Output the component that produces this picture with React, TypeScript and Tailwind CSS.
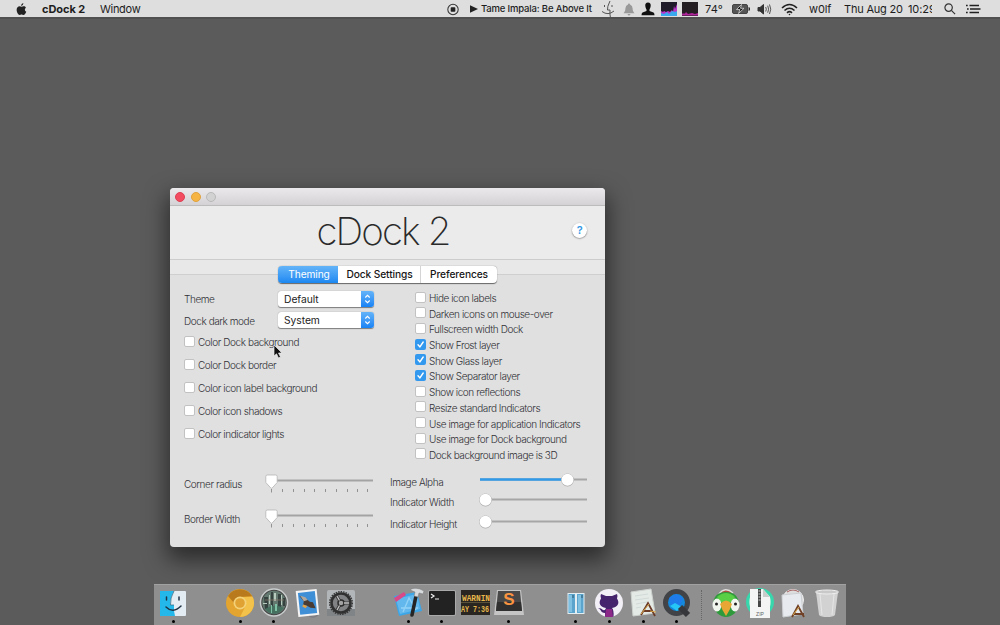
import React from "react";

type Item = { label: string; checked?: boolean };

const leftChecks: Item[] = [
  { label: "Color Dock background" },
  { label: "Color Dock border" },
  { label: "Color icon label background" },
  { label: "Color icon shadows" },
  { label: "Color indicator lights" },
];

const rightChecks: Item[] = [
  { label: "Hide icon labels" },
  { label: "Darken icons on mouse-over" },
  { label: "Fullscreen width Dock" },
  { label: "Show Frost layer", checked: true },
  { label: "Show Glass layer", checked: true },
  { label: "Show Separator layer", checked: true },
  { label: "Show icon reflections" },
  { label: "Resize standard Indicators" },
  { label: "Use image for application Indicators" },
  { label: "Use image for Dock background" },
  { label: "Dock background image is 3D" },
];

function Check({ label, checked }: Item) {
  return (
    <label className="flex items-center gap-[3px] whitespace-nowrap">
      <span
        className={
          checked
            ? "flex size-[11px] shrink-0 items-center justify-center rounded-[2px] bg-[#3299ee]"
            : "size-[11px] shrink-0 rounded-[2px] border border-[#c2c2c2] bg-white"
        }
      >
        {checked && (
          <svg viewBox="0 0 11 11" className="size-[11px]" fill="none" stroke="white" strokeWidth="1.4" strokeLinecap="round">
            <path d="M3 5.8 4.9 7.9 8.2 3" />
          </svg>
        )}
      </span>
      <span className="relative top-px">{label}</span>
    </label>
  );
}

function Select({ value }: { value: string }) {
  return (
    <div className="flex h-4 w-[96px] overflow-hidden rounded-[3px] bg-white font-['Inter',sans-serif] text-[10.3px] font-normal leading-4 tracking-[-0.05px] text-[#222] shadow-[0_0.5px_1px_rgba(0,0,0,0.45)]">
      <span className="flex-1 pl-[6px]">{value}</span>
      <span className="flex w-[13px] items-center justify-center bg-linear-to-b from-[#62b3f8] to-[#1683f5]">
        <svg viewBox="0 0 9 12" className="h-3 w-[9px]" fill="none" stroke="white" strokeWidth="1.1">
          <path d="M2.3 4.5 4.5 2.3 6.7 4.5M2.3 7.5 4.5 9.7 6.7 7.5" />
        </svg>
      </span>
    </div>
  );
}

function TickSlider() {
  return (
    <svg viewBox="0 0 110 20" className="h-5 w-[110px]">
      <path d="M2 6.5H109" stroke="#a3a3a3" strokeWidth="2" />
      <path d="M7.5 15v3.5M18.5 15v3M29.5 15v3M40.5 15v3M50.5 15v3M61.5 15v3M72.5 15v3M83.5 15v3M93.5 15v3M103.5 15v3" stroke="#929292" />
      <path d="M1.8 2.5Q1.8 1 3.3 1H11.7Q13.2 1 13.2 2.5V8.5L8.2 14Q7.5 14.6 6.8 14L1.8 8.5Z" fill="#fff" stroke="#b4b4b4" strokeWidth=".8" />
    </svg>
  );
}

function RoundSlider({ value }: { value: number }) {
  return (
    <svg viewBox="0 0 110 16" className="h-4 w-[110px]">
      <path d="M2 7.5H109" stroke="#a6a6a6" strokeWidth="2" />
      {value > 10 && <path d={`M2 7.5H${value}`} stroke="#3099e8" strokeWidth="2.4" />}
      <circle cx={value} cy="8" r="6.4" fill="#aaa" />
      <circle cx={value} cy="7.7" r="6" fill="#fff" />
    </svg>
  );
}

function MenuBar() {
  return (
    <header className="flex h-[17px] shrink-0 items-center whitespace-nowrap bg-[#dedede] pt-px font-['Inter',sans-serif] text-[11px] leading-4 text-[#1d1d1d]">
      <svg viewBox="0 0 12 14" className="ml-[16px] h-[13px] w-[11px]" fill="#222">
        <path d="M8 0C8.1 1.6 7 3 5.6 3.1 5.5 1.7 6.7.4 8 0ZM10.8 5C9.1 6.1 9.3 8.5 11.2 9.4 10.5 11.3 9.4 13 8.1 13 7.2 13 7 12.5 6 12.5S4.8 13 4 13C2.4 13 .7 10 .7 7.4.7 4.8 2.3 3.4 3.9 3.4 4.8 3.4 5.5 4 6.1 4 6.7 4 7.5 3.3 8.7 3.4 9.5 3.4 10.3 3.9 10.8 5Z" />
      </svg>
      <span className="ml-[15px] w-[58px] text-[11px] font-bold tracking-[-0.05px]">cDock 2</span>
      <span className="w-[346px] tracking-[-0.3px]">Window</span>
      <svg viewBox="0 0 14 14" className="h-[13px] w-[14px]">
        <circle cx="7" cy="7" r="5.6" fill="none" stroke="#333" strokeWidth="1.1" />
        <rect x="4.5" y="4.5" width="5" height="5" rx=".8" fill="#222" />
      </svg>
      <svg viewBox="0 0 9 8" className="ml-[9px] h-2 w-[9px]"><path d="M1 .2 9 4 1 7.8Z" fill="#222" /></svg>
      <span className="ml-[3px] w-[119px] text-[9.5px] font-medium tracking-[-0.17px]">Tame Impala: Be Above It</span>
      <svg viewBox="0 0 14 17" className="ml-px h-[17px] w-[14px]" fill="none" stroke="#555" strokeWidth="1">
        <path d="M9 0Q6 6 6.5 9H9Q8.6 13 9.5 17M3.5 4V6M11 4V6M1 10.5Q7 15 13 10" />
      </svg>
      <svg viewBox="0 0 12 13" className="ml-[8px] h-[13px] w-3" fill="#999">
        <path d="M6 .5Q7 .5 7 1.6 9.6 2.5 9.6 5.5C9.6 8 10.4 9 11.5 10.3H.5C1.6 9 2.4 8 2.4 5.5Q2.4 2.5 5 1.6 5 .5 6 .5ZM4.5 11H7.5Q7 12.5 6 12.5T4.5 11Z" />
      </svg>
      <svg viewBox="0 0 14 14" className="ml-[6px] h-[14px] w-[14px]" fill="#111">
        <path d="M7 .5C9 .5 10 2 9.7 4 9.500 6 8.700 7 8.500 7.600V9L12.500 10.500Q13.500 11.200 13.500 13.300H.5Q.5 11.200 1.500 10.500L5.500 9V7.600C5.300 7 4.500 6 4.300 4 4 2 5 .5 7 .5Z" />
      </svg>
      <svg viewBox="0 0 16 14" className="ml-[6px] h-[14px] w-4">
        <rect width="16" height="14" fill="#201b28" />
        <path d="M0 14V9L2 10 3 9 5 10 7 9 9 10 11 8 12 10 13 4 14 7 16 2V14Z" fill="#b836cc" />
        <path d="M0 14V11L3 12 6 10 8 12 11 9 14 10 16 9V14Z" fill="#38a9ec" />
      </svg>
      <svg viewBox="0 0 16 14" className="ml-[5px] h-[14px] w-4">
        <rect width="16" height="14" fill="#231c20" />
        <path d="M0 13.500V11.500H3L4 10 6 12 10 11 13 12 16 11V13.500Z" fill="#b0249c" />
      </svg>
      <span className="ml-[7px] w-[27px] tracking-[0.1px]">74°</span>
      <svg viewBox="0 0 19 12" className="h-3 w-[19px]">
        <rect x=".5" y="1.500" width="15" height="9" rx="1.500" fill="#555" stroke="#444" />
        <path d="M17 4.500Q18.500 6 17 7.500Z" fill="#333" stroke="#333" />
        <path d="M9.500 1.500 4.500 6.600H8L6.500 10.500 12 5.300H8.500Z" fill="#111" stroke="#ddd" strokeWidth=".8" />
      </svg>
      <svg viewBox="0 0 15 12" className="ml-[6px] h-3 w-[15px]" fill="none" stroke="#555">
        <path d="M1 4.500V8H3L6.500 11V1.500L3 4.500Z" fill="#333" stroke="#333" />
        <path d="M8.700 4Q10 6.200 8.700 8.500M10.700 2.700Q12.500 6.200 10.700 9.700M12.500 1.500Q15 6.200 12.500 11" />
      </svg>
      <svg viewBox="0 0 17 13" className="ml-[9px] h-[13px] w-[17px]" fill="none" stroke="#222" strokeWidth="1.600">
        <path d="M1 5Q8.500-2 16 5M3.500 7.500Q8.500 3 13.500 7.500M6 9.800Q8.500 7.600 11 9.800" />
        <circle cx="8.500" cy="11.500" r=".8" fill="#222" stroke="none" />
      </svg>
      <span className="ml-[11px] w-[35px] tracking-[-0.1px]">w0lf</span>
      <span className="w-[64px] tracking-[-0.2px]">Thu Aug 20</span>
      <span className="w-[24px] overflow-hidden tracking-[-0.1px]">10:29</span>
      <svg viewBox="0 0 13 13" className="ml-[12px] size-[12px]" fill="none" stroke="#333" strokeWidth="1.300">
        <circle cx="5" cy="5" r="4" /><path d="M8 8 12 12" />
      </svg>
      <svg viewBox="0 0 15 10" className="ml-[10px] h-[10px] w-[15px]" stroke="#222" strokeWidth="1.500">
        <path d="M0 1.500H1.700M1 5H2.700M0 8.500H1.700M3.500 1.500H13M4 5H14.500M3.500 8.500H13" />
      </svg>
    </header>
  );
}

function SettingsWindow() {
  return (
    <main className="absolute left-[170px] top-[188px] flex h-[359px] w-[435px] flex-col overflow-hidden rounded-[4px] bg-[#e0e0e0] font-['Inter',sans-serif] text-[10px] font-light leading-3 tracking-[-0.43px] text-[#303036]">
      <div className="flex h-[18px] shrink-0 items-center gap-[5.500px] border-b border-[#bcbcbc] bg-linear-to-b from-[#ebe9eb] to-[#d4d2d4] pl-[5px]">
        <i className="size-[10px] rounded-full border border-[#dc4054] bg-[#f34b60]" />
        <i className="size-[10px] rounded-full border border-[#dfa13c] bg-[#f6b445]" />
        <i className="size-[10px] rounded-full border border-[#b9b9b9] bg-[#d2d2d2]" />
      </div>
      <div className="grid h-[54px] shrink-0 grid-cols-[50px_1fr_50px] items-center border-b border-[#cccccc] bg-[#ebebeb]">
        <span />
        <h1 className="mb-[4px] pr-[9px] text-center font-['Inter',sans-serif] text-[38.500px] font-extralight leading-[48px] tracking-[-1.900px] text-[#2a2a2a]">cDock 2</h1>
        <button className="mb-[5px] ml-[17px] flex size-[15px] items-center justify-center rounded-full bg-white text-[11px] font-semibold text-[#3799e5] shadow-[0_0.5px_1.5px_rgba(0,0,0,0.5)]">?</button>
      </div>
      <div className="flex h-[15px] shrink-0 justify-center border-b border-[#cfcfcf] bg-[#e8e8e8] pt-[6px]">
        <nav className="z-10 flex h-[17px] w-[219px] shrink-0 overflow-hidden rounded-[4px] bg-white text-center text-[10.200px] font-medium leading-[17px] tracking-[-0.1px] text-[#161616] shadow-[0_0.5px_1px_rgba(0,0,0,0.55)]">
          <span className="w-[60px] bg-linear-to-b from-[#62b4f8] to-[#1a88f1] pl-[2px] font-normal text-white">Theming</span>
          <span className="w-[83px] border-r border-[#d4d4d4] pl-px">Dock Settings</span>
          <span className="w-[76px]">Preferences</span>
        </nav>
      </div>
      <div className="flex h-[187px] shrink-0 px-[14px] pt-[16px]">
        <section className="-mt-[2px] w-[231px]">
          <div className="flex h-[20px] items-center">
            <span className="w-[94px]">Theme</span>
            <Select value="Default" />
          </div>
          <div className="flex h-[21px] items-center">
            <span className="relative top-px w-[94px]">Dock dark mode</span>
            <Select value="System" />
          </div>
          <div className="mt-[5px] flex h-[104px] flex-col justify-between">
            {leftChecks.map((c) => <Check key={c.label} {...c} />)}
          </div>
        </section>
        <section className="flex h-[169px] flex-col justify-between">
          {rightChecks.map((c) => <Check key={c.label} {...c} />)}
        </section>
      </div>
      <div className="flex pl-[14px] pt-[12px]">
        <section className="flex w-[206px] flex-col gap-[15px]">
          {["Corner radius", "Border Width"].map((t) => (
            <div key={t} className="flex h-5 items-center">
              <span className="w-[80px]">{t}</span>
              <TickSlider />
            </div>
          ))}
        </section>
        <section className="-mt-[4px]">
          <div className="flex h-[20px] items-center"><span className="relative top-[2px] w-[88px]">Image Alpha</span><RoundSlider value={89.5} /></div>
          <div className="flex h-[20px] items-center"><span className="relative top-[2px] w-[88px]">Indicator Width</span><RoundSlider value={7.5} /></div>
          <div className="flex h-[24px] items-center"><span className="relative top-[2px] w-[88px]">Indicator Height</span><RoundSlider value={7.5} /></div>
        </section>
      </div>
    </main>
  );
}

const icons: Record<string, React.ReactNode> = {
  finder: <>
    <rect x="1" y="2" width="26" height="25" rx="1" fill="#e3ebf3" />
    <path d="M1 2H15Q11 9 11.5 16H15Q14.5 22 16 27H1Z" fill="#23b7ea" />
    <path d="M7.5 8V11M20 8V11M7 18Q14 25 22 17" fill="none" stroke="#203345" strokeWidth="1.5" strokeLinecap="round" />
    <path d="M15 2Q11 9 11.5 16H15" fill="none" stroke="#3b657d" strokeWidth=".7" />
  </>,
  chrome: <>
    <circle cx="14" cy="14" r="14" fill="#e3a52f" />
    <path d="M2 7A14 14 0 0 1 26 7L14 8 8 14Z" fill="#b97a1d" />
    <path d="M14 8H26.7A14 14 0 0 1 14 28L19 18Z" fill="#f2c24b" />
    <circle cx="14" cy="14" r="6.5" fill="#f4d27a" /><circle cx="14" cy="14" r="4.8" fill="#dfa233" />
  </>,
  globe: <>
    <circle cx="14" cy="13.5" r="13.5" fill="#444" stroke="#c9cccc" strokeWidth="1.5" />
    <circle cx="14" cy="13.5" r="11.8" fill="#63796f" />
    <path d="M4 8H8V20H5ZM11 3H13V18H11ZM18 5H21V19H18ZM23 9H25V17H23Z" fill="#35423f" />
    <path d="M9 6H10V15H9ZM14 4H16V12H14ZM3 14H7V15H3ZM21 6H22V16H21Z" fill="#b7cabd" />
    <path d="M5 20Q14 14 24 19L20 23Q14 27 8 23Z" fill="#45705f" />
    <path d="M11 16H12V24H11ZM15 15H17V22H15Z" fill="#7fc1a4" /><path d="M5 11H24" stroke="#8c776c" strokeWidth=".7" />
  </>,
  mail: <>
    <circle cx="20" cy="22" r="6" fill="none" stroke="#7d7d83" strokeWidth="1.5" />
    <g transform="rotate(-6 14 14)">
      <rect x="4" y="1" width="21" height="26" fill="#f4f4f4" /><rect x="6" y="3" width="17" height="22" fill="#3f8fd6" />
      <path d="M7 6 13 9 17 13 20 14 22 20 17 19 14 17 10 15 11 12Z" fill="#4a3c33" /><path d="M8 6 13 8 15 11 11 12Z" fill="#b2a99c" /><path d="M10 15 14 17 12 19 9 17Z" fill="#e5a244" />
    </g>
  </>,
  prefs: <>
    <rect y="1" width="28" height="26" rx="2" fill="#b2b6b9" /><path d="M0 20H28V27H0Z" fill="#808486" />
    <circle cx="14" cy="14" r="11.300" fill="none" stroke="#3b3b3b" strokeWidth="1.500" strokeDasharray="1.500 1" />
    <circle cx="14" cy="14" r="9.500" fill="#808284" stroke="#303030" strokeWidth="2.600" />
    <path d="M14 14H22M14 14 9.500 6.500M14 14 9.500 21.500" stroke="#3b3b3b" strokeWidth="3" />
    <circle cx="14" cy="14" r="3" fill="#a2a2a2" stroke="#2c2c2c" strokeWidth="1.500" />
    <path d="M17 14H22M12.500 11.500 10 7M12.500 16.500 10 21" stroke="#c2c2c2" strokeWidth="1.300" />
  </>,
  xcode: <>
    <path d="M0 7 23 3 28 22 5 27Z" fill="#3da6e6" /><path d="M2 10 23 5 26 20 6 25Z" fill="#62b8ed" />
    <path d="M9 23 15 9 22 21M7 19H24" fill="none" stroke="#92d2f6" strokeWidth="1.300" />
    <path d="M0 9 10 3 12 6 2 13Z" fill="#d94988" />
    <path d="M18 26 22 7" stroke="#252525" strokeWidth="3.600" strokeLinecap="round" />
    <path d="M16 1Q19-2 26 0L30 2 29 5 25 4 24 8 20 7 21 3Z" fill="#d7dadc" stroke="#777" strokeWidth=".5" />
  </>,
  terminal: <>
    <rect y="1" width="28" height="26" rx="2" fill="#aaa" /><rect x="1" y="2" width="26" height="24" rx="1" fill="#222" />
    <path d="M3 5 6 7 3 9M7 10H11" fill="none" stroke="#eee" strokeWidth="1.2" />
  </>,
  console: <>
    <rect y="1" width="29" height="25" fill="#292622" /><path d="M0 13.5H29" stroke="#5a513a" />
    <text x="1" y="11.5" textLength="28" lengthAdjust="spacingAndGlyphs" fill="#e7b74b" className="font-['Liberation_Mono',monospace] text-[9px] font-bold tracking-normal">WARNIN</text>
    <text x="0" y="22.5" textLength="28" lengthAdjust="spacingAndGlyphs" fill="#e7b74b" className="font-['Liberation_Mono',monospace] text-[9px] font-bold tracking-normal">AY 7:36</text>
  </>,
  sublime: <>
    <path d="M2 1H26L29 26H-1Z" fill="#c5c5c5" /><path d="M3 2H25L27 22H1Z" fill="#484848" /><path d="M2 13H26L27 22H1Z" fill="#303030" />
    <text x="14" y="16" textAnchor="middle" fill="#fa9440" className="font-['Liberation_Sans',sans-serif] text-[17px] font-bold">S</text>
  </>,
  columns: <>
    <rect x="5.500" y="4" width="17" height="21" fill="#e3eef2" /><path d="M6.500 5H13V24H6.500ZM15 5H21.500V24H15Z" fill="#5ba4ce" /><path d="M7 6H10V23H7ZM16 6H19V23H16Z" fill="#80c0e0" /><path d="M11 6V9M20 6V9" stroke="#315a73" />
  </>,
  github: <>
    <circle cx="14" cy="14" r="14" fill="#f2eff6" />
    <path d="M6 5 11 7H17L22 5Q23 7 22 9.5C25 14 23 18 17 19Q19 21 18.5 27.5H10V24C5 24 7 20 3 19.500 7 18 7 22 10 21L11 19C5 18 3 14 6 9.500Q5 7 6 5Z" fill="#45246d" /><path d="M11 20H17L18 28H10Z" fill="#8b2888" />
  </>,
  textdoc: <>
    <path d="M2 3 22 0 26 24 4 27Z" fill="#e4ebe7" stroke="#cdd1ce" /><path d="M6 7 19 5M6 11 20 9M7 15 18 13M7 19 12 18" stroke="#d1dad8" />
    <path d="M12 26 19 14 26 27M15 22H23" fill="none" stroke="#6b3b27" strokeWidth="1.800" /><path d="M12 25 20 15M21 22 27 23" stroke="#d9a84a" />
  </>,
  quick: <>
    <circle cx="13.500" cy="13.500" r="11" fill="#1488dc" stroke="#414347" strokeWidth="5" /><path d="M6 9 13 5 20 9 17 17 8 17Z" fill="#1f7bea" /><path d="M7 17 12 14 19 18 14 22Z" fill="#25c6f6" />
    <path d="M17 18 25 26" stroke="#36373b" strokeWidth="6" />
  </>,
  parrot: <>
    <path d="M7 5Q13-3 21 4" fill="#ae5040" stroke="#dedede" strokeWidth="1.5" />
    <path d="M1 15Q2 3 14 3T27 15L23 24Q14 32 5 24Z" fill="#2f9a3c" /><path d="M5 8Q14 0 23 8L20 13H8Z" fill="#58cf44" />
    <ellipse cx="5" cy="16" rx="4.5" ry="6.5" fill="#f0f5ed" /><ellipse cx="23" cy="16" rx="4.5" ry="6.5" fill="#f0f5ed" />
    <circle cx="4.500" cy="15" r="1.5" fill="#222" /><circle cx="23.500" cy="15" r="1.5" fill="#222" /><path d="M8 15Q14 8 20 15 18 21 14 27 10 21 8 15Z" fill="#e8a735" />
  </>,
  zip: <>
    <circle cx="14" cy="13" r="12.5" fill="#9fe6d0" stroke="#38d6ac" strokeWidth="3" /><path d="M4 0H17L24 8V29H4Z" fill="#f3f4f3" /><path d="M17 0V8H24Z" fill="#c8cdcb" /><path d="M12 0H15V18H12Z" fill="#454545" /><path d="M12.500 2H14.500M12.500 5H14.500M12.500 8H14.500M12.500 11H14.500" stroke="#ccc" />
    <text x="14" y="27" textAnchor="middle" fill="#666" className="font-['Liberation_Sans',sans-serif] text-[5px]">ZIP</text>
  </>,
  draft: <>
    <circle cx="14" cy="11" r="10.5" fill="#ddd" stroke="#eee" /><path d="M8 3Q14-1 20 3" fill="none" stroke="#a66060" /><path d="M3 6 22 4 24 25 4 28Z" fill="#e7eaef" stroke="#cdd0d3" /><path d="M13 28 19 17 25 28M15 25H25" fill="none" stroke="#704127" strokeWidth="1.8" /><path d="M14 26 20 18" stroke="#dfad4a" />
  </>,
  trash: <>
    <path d="M3 3H25L22 26Q20 28 14 28T6 26Z" fill="#d9d9d9" fillOpacity=".9" /><path d="M7 5 9 26M21 5 19 26" stroke="#e6e6e6" /><ellipse cx="14" cy="3" rx="11.5" ry="2" fill="#c9c9c9" stroke="#efefef" />
  </>,
};

const slots = ["finder*", "", "chrome*", "globe*", "mail", "prefs", "", "xcode*", "terminal*", "console", "sublime*", "", "columns*", "github*", "textdoc*", "quick*", "|", "parrot", "zip", "draft", "trash"];

function Dock() {
  return (
    <footer className="absolute bottom-0 left-[154px] flex h-[41px] w-[692px] border-t border-[#a1a1a1] bg-[#8f8f8f] pl-[2.400px]">
      {slots.map((s, i) =>
        s === "|" ? (
          <span key={i} className="flex w-4 shrink-0 pl-[8px] pt-[5px]">
            <i className="h-[30px] border-r border-dotted border-[#666]" />
          </span>
        ) : (
          <span key={i} className="flex w-[33.570px] shrink-0 flex-col items-center pt-[4px]">
            {s && <svg viewBox="0 0 28 28" className="size-[28px] overflow-visible">{icons[s.replace("*", "")]}</svg>}
            {s.endsWith("*") && <i className="mt-[3px] size-[3px] rounded-full bg-black" />}
          </span>
        ),
      )}
    </footer>
  );
}

export default function App() {
  return (
    <div className="relative flex h-[625px] w-[1000px] flex-col overflow-hidden bg-[#5b5b5b]">
      <MenuBar />
      <div className="h-[2px] bg-[#505050]" />
      <div className="absolute left-[170px] top-[188px] h-[359px] w-[435px] rounded-[4px] shadow-[0_10px_22px_3px_rgba(0,0,0,0.52)]" />
      <SettingsWindow />
      <svg viewBox="0 0 10 15" className="absolute left-[273px] top-[344px] h-[15px] w-[10px]">
        <path d="M1 1V12L3.5 9.8 5.5 14 7.5 13 5.5 9H9Z" fill="#111" stroke="#eee" strokeWidth=".7" />
      </svg>
      <Dock />
    </div>
  );
}
